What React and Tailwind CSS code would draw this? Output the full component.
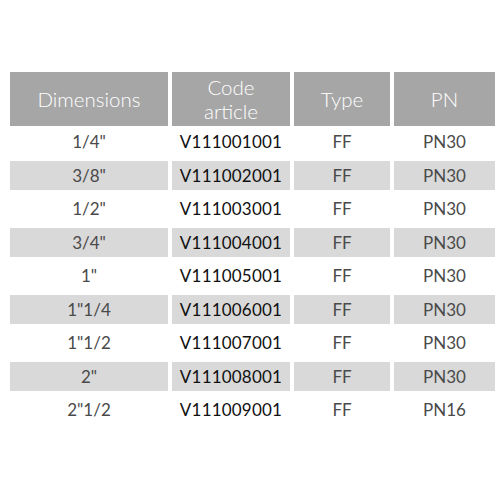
const rows = [
  ['1/4"', 'V111001001', 'FF', 'PN30'],
  ['3/8"', 'V111002001', 'FF', 'PN30'],
  ['1/2"', 'V111003001', 'FF', 'PN30'],
  ['3/4"', 'V111004001', 'FF', 'PN30'],
  ['1"', 'V111005001', 'FF', 'PN30'],
  ['1"1/4', 'V111006001', 'FF', 'PN30'],
  ['1"1/2', 'V111007001', 'FF', 'PN30'],
  ['2"', 'V111008001', 'FF', 'PN30'],
  ['2"1/2', 'V111009001', 'FF', 'PN16'],
];

export default function App() {
  return (
    <div className="w-[500px] h-[500px] bg-white pt-[72px] pl-[10px]" style={{ fontFamily: 'Lato, "Open Sans", sans-serif' }}>
      <div className="grid grid-cols-[158px_118px_96px_101px] gap-x-1">
        {['Dimensions', 'Code article', 'Type', 'PN'].map((h) => (
          <div key={h} className="h-[54px] bg-[#a6a6a6] text-white text-[20.5px] leading-[24px] font-light flex items-center justify-center text-center px-6">
            {h}
          </div>
        ))}
      </div>
      <div className="mt-[1px] flex flex-col gap-y-1">
        {rows.map((r, i) => (
          <div key={r[1]} className="grid grid-cols-[158px_118px_96px_101px] gap-x-1">
            {r.map((c, j) => (
              <div
                key={j}
                className={`h-[29.5px] flex items-center justify-center text-[17px] font-normal ${i % 2 ? 'bg-[#d9d9d9]' : 'bg-white'} ${j === 1 ? 'text-[#111] tracking-[0.2px]' : 'text-[#4a4a4a]'}`}
              >
                {c}
              </div>
            ))}
          </div>
        ))}
      </div>
    </div>
  );
}
